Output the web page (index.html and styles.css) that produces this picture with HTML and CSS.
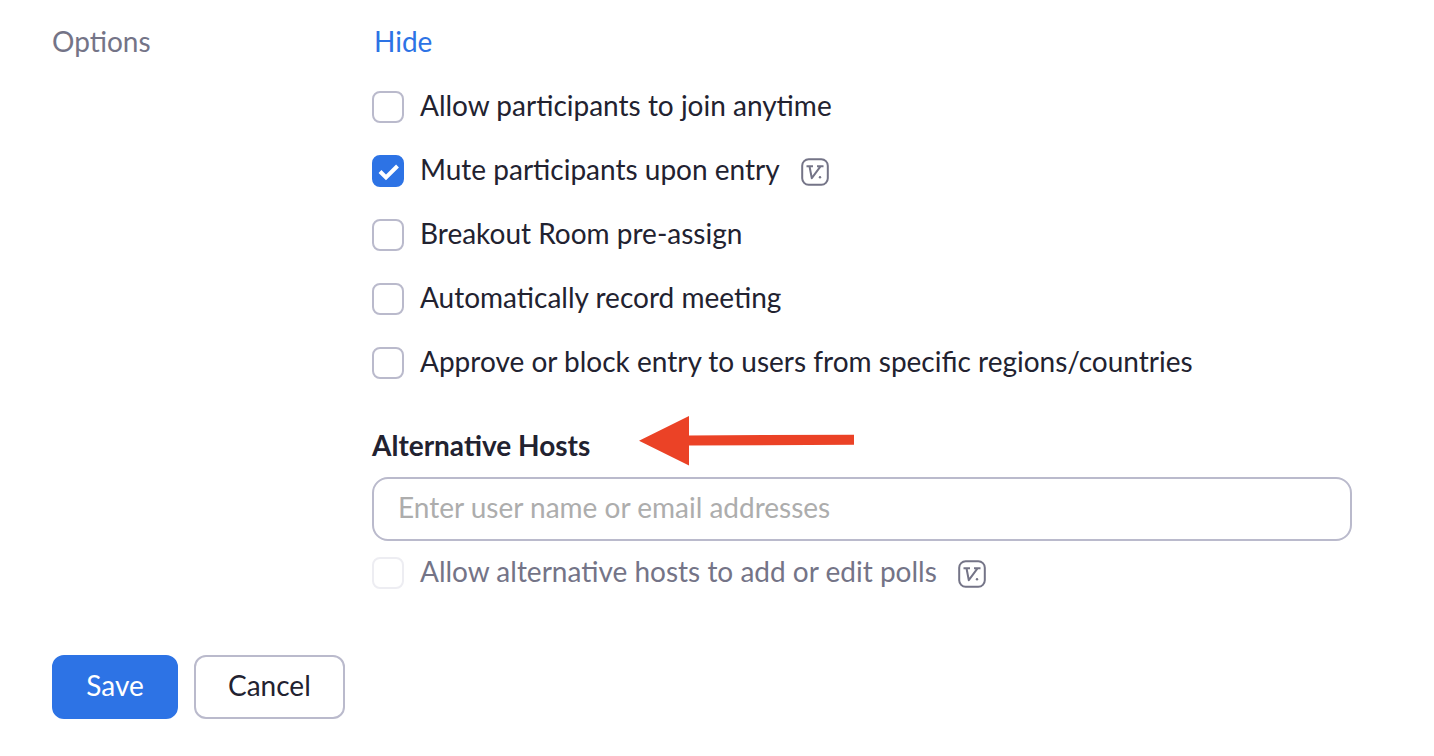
FILE: index.html
```html
<!DOCTYPE html>
<html lang="en">
<head>
<meta charset="utf-8">
<title>Meeting options</title>
<link rel="stylesheet" href="styles.css">
</head>
<body>
<form class="meeting-form">
  <div class="row">
    <div class="row-label">Options</div>
    <div class="row-content">
      <a class="toggle-link" href="#">Hide</a>
      <div class="options">
        <label class="option"><input class="checkbox" type="checkbox"><span>Allow participants to join anytime</span></label>
        <label class="option"><input class="checkbox" type="checkbox" checked><span>Mute participants upon entry</span>
          <svg class="badge" viewBox="0 0 28 28" aria-hidden="true"><rect x="1.2" y="1.2" width="25.6" height="25.6" rx="6.5"/><path class="badge-letter" d="M5.5 8.3h6.5M8.5 8.3l2.3 11.9L19.5 8.3M16 8.3h6.5"/><circle class="badge-dot" cx="19" cy="19.2" r="1.2"/></svg>
        </label>
        <label class="option"><input class="checkbox" type="checkbox"><span>Breakout Room pre-assign</span></label>
        <label class="option"><input class="checkbox" type="checkbox"><span>Automatically record meeting</span></label>
        <label class="option"><input class="checkbox" type="checkbox"><span>Approve or block entry to users from specific regions/countries</span></label>
      </div>
      <div class="hosts-heading">
        <label class="hosts-label" for="hosts">Alternative Hosts</label>
        <svg class="arrow" viewBox="0 0 216 50" aria-hidden="true"><path d="M0 24.700L50 0v19.400L215 18.700v10L50 29.600v20z"/></svg>
      </div>
      <input class="hosts-input" id="hosts" type="text" placeholder="Enter user name or email addresses">
      <label class="option option-disabled"><input class="checkbox" type="checkbox" disabled><span>Allow alternative hosts to add or edit polls</span>
        <svg class="badge" viewBox="0 0 28 28" aria-hidden="true"><rect x="1.2" y="1.2" width="25.6" height="25.6" rx="6.5"/><path class="badge-letter" d="M5.5 8.3h6.5M8.5 8.3l2.3 11.9L19.5 8.3M16 8.3h6.5"/><circle class="badge-dot" cx="19" cy="19.2" r="1.2"/></svg>
      </label>
    </div>
  </div>
  <div class="actions">
    <button class="button button-primary" type="submit">Save</button>
    <button class="button" type="button">Cancel</button>
  </div>
</form>
</body>
</html>
```

FILE: styles.css
```css
* { box-sizing: border-box; }
body { margin: 0; background: #fff; color: #222230; font-family: Lato, "Liberation Sans", sans-serif; font-size: 28px; line-height: 40px; }
.meeting-form { padding: 21px 82px 36px 52px; }
.row { display: grid; grid-template-columns: 320px 1fr; }
.row-label { color: #747487; }
.toggle-link { display: block; width: max-content; padding-left: 2px; color: #2d73e5; text-decoration: none; }
.options { display: grid; gap: 24px; margin-top: 24px; }
.option { display: flex; align-items: center; gap: 16px; height: 40px; width: max-content; }
.checkbox { appearance: none; width: 32px; height: 32px; margin: 4px 0 0; border: 2px solid #babacc; border-radius: 8px; background: #fff; }
.checkbox:checked { border-color: #2d73e5; background: #2d73e5 url("data:image/svg+xml,%3Csvg xmlns='http://www.w3.org/2000/svg' viewBox='0 0 28 28'%3E%3Cpath d='M6 14.500l6 6L23.500 9' fill='none' stroke='white' stroke-width='4'/%3E%3C/svg%3E"); }
.badge { width: 28px; height: 28px; margin: 6px 0 0 5px; fill: none; stroke: #747487; stroke-width: 2; }
.badge-letter { stroke-width: 2; stroke-linejoin: round; }
.badge-dot { fill: #747487; stroke: none; }
.hosts-heading { display: flex; align-items: center; gap: 49px; height: 50px; margin-top: 35px; }
.hosts-label { font-weight: 700; padding-top: 8px; }
.arrow { width: 216px; height: 50px; fill: #eb4226; }
.hosts-input { display: block; width: 100%; height: 64px; margin-top: 11px; padding: 0 24px 4px; border: 2px solid #babacc; border-radius: 16px; color: #222230; font: inherit; }
.hosts-input::placeholder { color: #adadad; opacity: 1; }
.option-disabled { margin-top: 10px; color: #747487; }
.checkbox:disabled { border-color: #ededf2; }
.actions { display: flex; gap: 16px; margin-top: 64px; }
.button { height: 64px; padding: 0 32px 4px; border: 2px solid #babacc; border-radius: 12px; background: #fff; color: #222230; font: inherit; }
.button-primary { min-width: 126px; border-color: #2d73e5; background: #2d73e5; color: #fff; }
```
